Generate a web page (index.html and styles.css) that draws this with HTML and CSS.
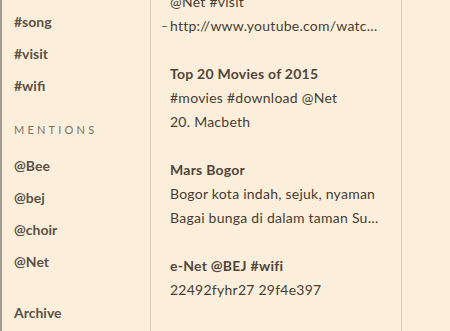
FILE: index.html
```html
<!DOCTYPE html>
<html lang="en">
<head>
    <meta charset="UTF-8">
    <meta name="viewport" content="width=device-width, initial-scale=1.0">
    <title>Notes</title>
    <link rel="stylesheet" href="styles.css">
</head>
<body>
    <div class="app">
        <div class="sidebar">
            <div class="side-list">
                <div class="side-item">#song</div>
                <div class="side-item">#visit</div>
                <div class="side-item">#wifi</div>
                <div class="side-title">MENTIONS</div>
                <div class="side-item">@Bee</div>
                <div class="side-item">@bej</div>
                <div class="side-item">@choir</div>
                <div class="side-item">@Net</div>
                <div class="side-item archive">Archive</div>
            </div>
        </div>

        <div class="notes">
            <div class="note-list">
                <div class="note">
                    <div class="line">@Net #visit</div>
                    <div class="line link"><span class="dash">–</span><span class="url">http://www.youtube.com/watch?v=Yx8kQ2</span></div>
                </div>
                <div class="note">
                    <div class="line title">Top 20 Movies of 2015</div>
                    <div class="line">#movies #download @Net</div>
                    <div class="line">20. Macbeth</div>
                </div>
                <div class="note">
                    <div class="line title">Mars Bogor</div>
                    <div class="line">Bogor kota indah, sejuk, nyaman</div>
                    <div class="line">Bagai bunga di dalam taman Surga dunia</div>
                </div>
                <div class="note">
                    <div class="line title">e-Net @BEJ #wifi</div>
                    <div class="line">22492fyhr27 29f4e397</div>
                </div>
            </div>
        </div>

        <div class="editor"></div>
    </div>
</body>
</html>
```

FILE: styles.css
```css
* { box-sizing: border-box; margin: 0; padding: 0; }
html, body { height: 100%; }
body {
    font-family: Lato, "Open Sans", sans-serif;
    background: #fbefdc;
    color: #483d32;
    overflow: hidden;
}
.app {
    display: flex;
    height: 100vh;
    border-left: 2px solid #a09c96;
}
.sidebar {
    width: 149px;
    flex-shrink: 0;
    border-right: 1px solid #d8cbb6;
    overflow: hidden;
}
.side-list {
    padding: 6px 0 0 12px;
}
.side-item {
    height: 32px;
    line-height: 32px;
    font-size: 14px;
    font-weight: bold;
    color: #5b5246;
}
.side-title {
    margin: 12px 0 4px;
    height: 32px;
    line-height: 32px;
    font-size: 11px;
    letter-spacing: 3.2px;
    color: #7c7365;
}
.archive { margin-top: 19px; }
.notes {
    width: 251px;
    flex-shrink: 0;
    border-right: 1px solid #d8cbb6;
    padding: 0 20px 0 19px;
    overflow: hidden;
}
.note-list {
    margin-top: -10px;
}
.note {
    margin-bottom: 24px;
}
.line {
    height: 24px;
    line-height: 24px;
    font-size: 14px;
    letter-spacing: 0.25px;
    white-space: nowrap;
    overflow: hidden;
    text-overflow: ellipsis;
}
.title {
    font-weight: bold;
    color: #52453a;
}
.link {
    display: flex;
    margin-left: -9px;
}
.link .dash {
    width: 9px;
    flex-shrink: 0;
    font-size: 12px;
}
.link .url {
    overflow: hidden;
    text-overflow: ellipsis;
}
.editor { flex: 1; }
```
